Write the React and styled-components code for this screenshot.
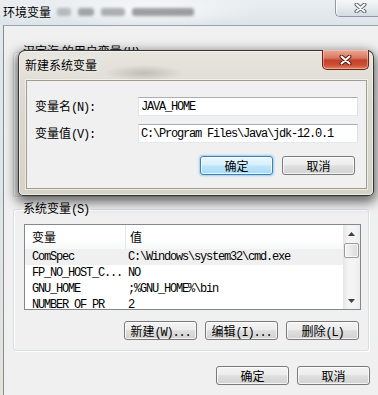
import React from "react";
import styled, { createGlobalStyle } from "styled-components";

const CJK = `"Noto Sans CJK SC", "Noto Sans", sans-serif`;
const MONO = `"Liberation Mono", "DejaVu Sans Mono", monospace`;

const GlobalStyle = createGlobalStyle`
  *, *::before, *::after { box-sizing: border-box; }
  html, body { margin: 0; padding: 0; }
  body {
    width: 378px; height: 395px; overflow: hidden;
    background: #f0f0f0; color: #000;
    font-family: ${CJK}; font-size: 12px;
  }
`;

const L = styled.span`
  font-family: ${MONO};
  font-size: 12px;
  letter-spacing: -1.2px;
`;

/* ---------- outer window ---------- */
const Window = styled.div`
  position: relative;
  width: 378px; height: 395px; overflow: hidden;
  display: flex; flex-direction: column;
  background: linear-gradient(180deg, #e3e8ec 0%, #dfe4e6 50%, #e4e2da 100%);
`;

const TitleBar = styled.header`
  flex: none; height: 25px;
  display: flex; align-items: flex-start;
  padding-left: 3px;
  background:
    radial-gradient(ellipse 110px 18px at 150px 10px, rgba(255,255,255,.75), transparent),
    linear-gradient(180deg, #eaeef1 0%, #dde4e9 100%);
`;

const WinTitle = styled.h1`
  margin: 0;
  font-size: 12px; font-weight: 400; line-height: 24px;
  text-shadow: 0 0 6px rgba(255,255,255,.9);
`;

const Blur = styled.div`
  display: flex; gap: 7px;
  margin: 8px 0 0 6px;
  filter: blur(1.8px);
`;

const Blob = styled.span`
  display: block;
  width: ${p => p.$w}px; height: 8px;
  border-radius: 3px;
  background: rgba(70, 70, 70, ${p => p.$o});
`;

const CloseSmall = styled.button`
  margin-left: auto;
  width: 43px; height: 17px;
  padding: 0 0 0 7px;
  border: 1px solid #8f9aa5; border-top: 0; border-right: 0;
  border-radius: 0 0 0 5px;
  background: linear-gradient(180deg, #f5f7f9 0%, #e6ebee 50%, #d4dbe1 100%);
  box-shadow: inset 1px 0 0 rgba(255,255,255,.85);
  display: flex; align-items: center; justify-content: center;
`;

const Client = styled.main`
  flex: 1;
  margin-left: 3px;
  border-left: 1px solid #848c94;
  border-top: 1px solid #9aa3ab;
  background: #f0f0f0;
  display: flex; flex-direction: column; align-items: flex-start;
  padding: 18px 0 0 9px;
`;

const Group = styled.fieldset`
  margin: ${p => p.$mt || 0}px 0 0 0;
  width: 356px;
  ${p => (p.$h ? `height: ${p.$h}px;` : "")}
  min-width: 0;
  padding: 0 7px 10px 10px;
  border: 1px solid #d5dfe5;
  border-radius: 3px;
  box-shadow: inset 1px 1px 0 #fff, 1px 1px 0 #fff;
`;

const Legend = styled.legend`
  margin-left: -3px;
  padding: 0 2px;
  font-size: 12px; line-height: 14px;
  white-space: nowrap;
`;

/* ---------- list view ---------- */
const List = styled.div`
  margin-top: 7px;
  width: 337px; height: 86px;
  border: 1px solid #828790;
  background: #fff;
  display: flex;
  overflow: hidden;
`;

const ListMain = styled.div`
  flex: 1; min-width: 0;
  display: flex; flex-direction: column;
  overflow: hidden;
`;

const Header = styled.div`
  flex: none; height: 24px;
  display: flex;
  background: linear-gradient(180deg, #ffffff 0%, #ffffff 55%, #f7f8f9 100%);
`;

const HeadCell = styled.div`
  ${p => (p.$w ? `width: ${p.$w}px; flex: none; border-right: 1px solid #e2e5e9;` : "flex: 1;")}
  padding-left: ${p => p.$pl}px;
  font-size: 12px; line-height: 24px;
`;

const Row = styled.div`
  flex: none; height: 16px;
  display: flex;
  background: ${p => (p.$sel ? "#f0f0f0" : "transparent")};
`;

const Cell = styled.div`
  ${p => (p.$w ? `width: ${p.$w}px; flex: none;` : "flex: 1;")}
  padding-left: ${p => p.$pl}px;
  font-family: ${MONO}; font-size: 12px; letter-spacing: -1.2px;
  line-height: 16px;
  white-space: nowrap; overflow: hidden;
`;

const Scroll = styled.div`
  flex: none; width: 17px;
  display: flex; flex-direction: column;
  background: linear-gradient(90deg, #e6e6e6 0%, #f4f4f4 30%, #f4f4f4 70%, #ececec 100%);
`;

const Arrow = styled.div`
  flex: none; height: 17px;
  display: flex; align-items: center; justify-content: center;
`;

const Thumb = styled.div`
  flex: none; height: 15px;
  margin: 1px 1px 0 1px;
  border: 1px solid #9a9a9a;
  border-radius: 2px;
  background: linear-gradient(90deg, #f4f4f4 0%, #e8e8e8 50%, #d9d9d9 100%);
  box-shadow: inset 0 0 0 1px rgba(255,255,255,.7);
`;

const Track = styled.div`
  flex: 1;
`;

/* ---------- buttons ---------- */
const ButtonRow = styled.div`
  align-self: stretch;
  display: flex; justify-content: flex-end;
  gap: ${p => p.$gap}px;
  margin-top: ${p => p.$mt}px;
  padding-right: ${p => p.$pr}px;
`;

const Btn = styled.button`
  width: 73px; height: 19px;
  padding: 0;
  border: 1px solid ${p => (p.$primary ? "#3c7fb1" : "#7a7a7a")};
  border-radius: 3px;
  background: ${p =>
    p.$primary
      ? "linear-gradient(180deg, #eaf6fd 0%, #d9f0fc 45%, #bee6fd 52%, #a7d9f5 100%)"
      : "linear-gradient(180deg, #f4f4f4 0%, #ececec 45%, #dedede 52%, #d2d2d2 100%)"};
  box-shadow: inset 0 0 0 1px rgba(255,255,255,.75)
    ${p => (p.$primary ? ", 0 0 2px 1px rgba(90,180,235,.55)" : "")};
  font-family: ${CJK}; font-size: 12px; line-height: 17px; color: #000;
  white-space: nowrap;
`;

/* ---------- modal dialog ---------- */
const Dialog = styled.section`
  position: absolute; left: 18px; top: 50px;
  width: 356px; height: 146px;
  border: 1px solid rgba(25, 25, 25, .85);
  border-radius: 7px 7px 5px 5px;
  padding: 0 6px 6px 7px;
  display: flex; flex-direction: column;
  background:
    radial-gradient(ellipse 40px 8px at 125px 22px, rgba(90,90,90,.25), transparent),
    linear-gradient(180deg, #e7e5df 0%, #dcd9d0 35%, #d6d2c5 100%);
  box-shadow: inset 0 0 0 1px rgba(255,255,255,.5), 0 4px 12px 2px rgba(0,0,0,.6);
`;

const DlgBar = styled.div`
  flex: none; height: 29px;
  display: flex; align-items: flex-start;
`;

const DlgTitle = styled.h2`
  margin: 0 0 0 -1px;
  font-size: 12px; font-weight: 400; line-height: 28px;
  text-shadow: 0 0 8px rgba(255,255,255,.95);
`;

const RedClose = styled.button`
  margin: -1px -2px 0 auto;
  width: 47px; height: 20px;
  padding: 0;
  border: 1px solid #6b2419; border-top: 0;
  border-radius: 0 0 5px 5px;
  background: linear-gradient(180deg, #eaa895 0%, #db7a63 40%, #c5412b 55%, #cc5036 80%, #de8660 100%);
  box-shadow: inset 0 0 0 1px rgba(255,215,195,.45);
  display: flex; align-items: center; justify-content: center;
`;

const DlgClient = styled.div`
  flex: 1;
  border: 1px solid #a09c8e;
  background: #f0f0f0;
  box-shadow: 0 0 0 1px rgba(255,255,255,.55);
  padding: 16px 8px 0 8px;
  display: flex; flex-direction: column;
`;

const Form = styled.div`
  display: grid;
  grid-template-columns: 103px 220px;
  row-gap: 8px;
  align-items: center;
`;

const FieldLabel = styled.label`
  font-size: 12px; line-height: 14px;
  white-space: nowrap;
`;

const Field = styled.input`
  width: 220px; height: 19px;
  margin: 0;
  padding: 0 0 0 2px;
  border: 1px solid;
  border-color: #abadb3 #dbdfe6 #e3e9ef #e2e3ea;
  background: #fff;
  color: #000;
  font-family: ${MONO}; font-size: 12px; letter-spacing: -1.2px;
  outline: none;
`;

/* ---------- icons ---------- */
const XIcon = ({ outline = "#5b6772" }) => (
  <svg width="13" height="10" viewBox="0 0 13 10">
    <path d="M2.5 1.5 L10.5 8.5 M10.5 1.5 L2.5 8.5" stroke={outline} strokeWidth="4" strokeLinecap="round" />
    <path d="M2.5 1.5 L10.5 8.5 M10.5 1.5 L2.5 8.5" stroke="#fff" strokeWidth="2" strokeLinecap="round" />
  </svg>
);

const Tri = ({ up }) => (
  <svg width="7" height="4" viewBox="0 0 7 4">
    <path d={up ? "M0 4 L3.5 0 L7 4 Z" : "M0 0 L3.5 4 L7 0 Z"} fill="#3f3f3f" />
  </svg>
);

const rows = [
  ["ComSpec", "C:\\Windows\\system32\\cmd.exe"],
  ["FP_NO_HOST_C...", "NO"],
  ["GNU_HOME", ";%GNU_HOME%\\bin"],
  ["NUMBER_OF_PR", "2"],
];

export default function App() {
  return (
    <>
      <GlobalStyle />
      <Window>
        <TitleBar>
          <WinTitle>环境变量</WinTitle>
          <Blur aria-hidden="true">
            <Blob $w={14} $o={0.3} />
            <Blob $w={16} $o={0.45} />
            <Blob $w={24} $o={0.4} />
            <Blob $w={62} $o={0.5} />
          </Blur>
          <CloseSmall aria-label="close">
            <XIcon />
          </CloseSmall>
        </TitleBar>

        <Client>
          <Group $h={153}>
            <Legend>汉定海 的用户变量<L>(U)</L></Legend>
          </Group>

          <Group $mt={4}>
            <Legend>系统变量<L>(S)</L></Legend>
            <List>
              <ListMain>
                <Header>
                  <HeadCell $w={101} $pl={7}>变量</HeadCell>
                  <HeadCell $pl={4}>值</HeadCell>
                </Header>
                {rows.map(([k, v], i) => (
                  <Row key={k} $sel={i === 0}>
                    <Cell $w={101} $pl={7}>{k}</Cell>
                    <Cell $pl={2}>{v}</Cell>
                  </Row>
                ))}
              </ListMain>
              <Scroll>
                <Arrow><Tri up /></Arrow>
                <Thumb />
                <Track />
                <Arrow><Tri /></Arrow>
              </Scroll>
            </List>
            <ButtonRow $gap={8} $mt={11} $pr={2}>
              <Btn>新建<L>(W)...</L></Btn>
              <Btn>编辑<L>(I)...</L></Btn>
              <Btn>删除<L>(L)</L></Btn>
            </ButtonRow>
          </Group>

          <ButtonRow $gap={8} $mt={15} $pr={8}>
            <Btn>确定</Btn>
            <Btn>取消</Btn>
          </ButtonRow>
        </Client>

        <Dialog>
          <DlgBar>
            <DlgTitle>新建系统变量</DlgTitle>
            <RedClose aria-label="close">
              <XIcon outline="#5a1a10" />
            </RedClose>
          </DlgBar>
          <DlgClient>
            <Form>
              <FieldLabel>变量名<L>(N):</L></FieldLabel>
              <Field readOnly value="JAVA_HOME" />
              <FieldLabel>变量值<L>(V):</L></FieldLabel>
              <Field readOnly value={"C:\\Program Files\\Java\\jdk-12.0.1"} />
            </Form>
            <ButtonRow $gap={9} $mt={13} $pr={3}>
              <Btn $primary>确定</Btn>
              <Btn>取消</Btn>
            </ButtonRow>
          </DlgClient>
        </Dialog>
      </Window>
    </>
  );
}
